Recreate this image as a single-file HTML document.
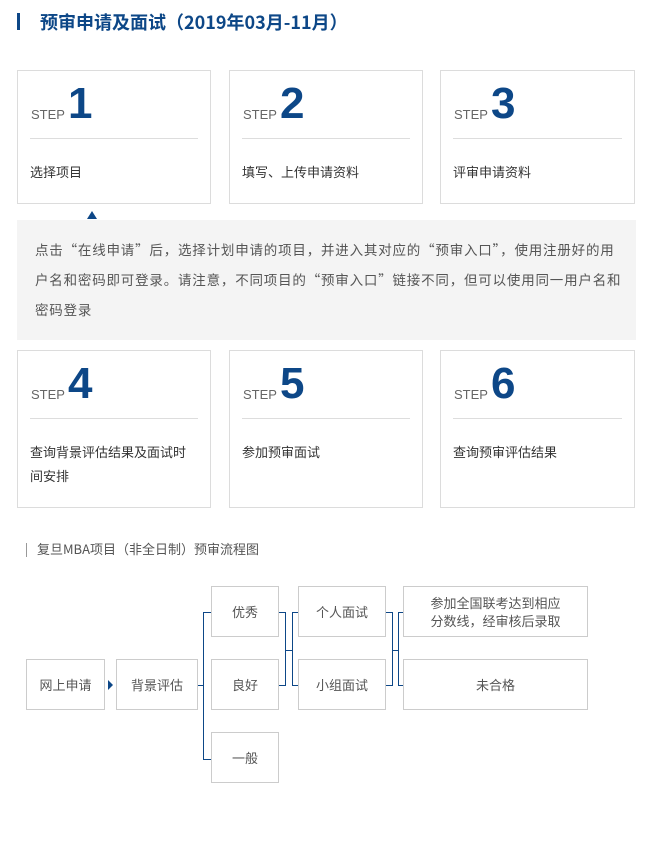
<!DOCTYPE html>
<html><head><meta charset="utf-8"><style>
*{margin:0;padding:0;box-sizing:border-box}
body{width:658px;height:850px;background:#fff;font-family:"Noto Sans CJK SC","Liberation Sans",sans-serif;position:relative;overflow:hidden;color:#555}
.a{position:absolute}
.title{left:40px;top:8px;font-size:18px;font-weight:bold;color:#0d4787;line-height:28px;white-space:nowrap}
.card{position:absolute;border:1px solid #dcdcdc;background:#fff}
.step{position:absolute;left:13px;top:36px;font-size:13px;color:#666;font-family:"Liberation Sans",sans-serif}
.num{position:absolute;left:50px;top:8px;font-size:44px;font-weight:bold;color:#0d4787;line-height:50px;font-family:"Liberation Sans",sans-serif}
.div{position:absolute;left:12px;right:12px;top:67px;border-top:1px solid #ddd}
.lab{position:absolute;left:12px;top:89px;font-size:13px;color:#333;line-height:24px;width:160px}
.gray{left:17px;top:220px;width:619px;height:120px;background:#f4f4f4;padding:14px 0 0 18px;font-size:13.5px;letter-spacing:0.8px;line-height:30px;color:#555;white-space:nowrap;overflow:hidden}
.box{position:absolute;border:1px solid #ccc;font-size:13px;color:#555;display:flex;align-items:center;justify-content:center;text-align:center;line-height:18px}
.ln{position:absolute;background:#0d4787}
</style></head><body>
<div class="a" style="left:17px;top:13px;width:3px;height:17px;background:#0d4787"></div>
<div class="a title">预审申请及面试（2019年03月-11月）</div>

<div class="card" style="left:17px;top:70px;width:194px;height:134px"><span class="step">STEP</span><span class="num">1</span><div class="div"></div><div class="lab">选择项目</div></div>
<div class="card" style="left:229px;top:70px;width:194px;height:134px"><span class="step">STEP</span><span class="num">2</span><div class="div"></div><div class="lab">填写、上传申请资料</div></div>
<div class="card" style="left:440px;top:70px;width:195px;height:134px"><span class="step">STEP</span><span class="num">3</span><div class="div"></div><div class="lab">评审申请资料</div></div>

<div class="a" style="left:87px;top:211px;width:0;height:0;border-left:5px solid transparent;border-right:5px solid transparent;border-bottom:8px solid #0d4787"></div>
<div class="a gray">点击“在线申请”后，选择计划申请的项目，并进入其对应的“预审入口”，使用注册好的用<br>户名和密码即可登录。请注意，不同项目的“预审入口”链接不同，但可以使用同一用户名和<br>密码登录</div>

<div class="card" style="left:17px;top:350px;width:194px;height:158px"><span class="step">STEP</span><span class="num">4</span><div class="div"></div><div class="lab">查询背景评估结果及面试时间安排</div></div>
<div class="card" style="left:229px;top:350px;width:194px;height:158px"><span class="step">STEP</span><span class="num">5</span><div class="div"></div><div class="lab">参加预审面试</div></div>
<div class="card" style="left:440px;top:350px;width:195px;height:158px"><span class="step">STEP</span><span class="num">6</span><div class="div"></div><div class="lab">查询预审评估结果</div></div>

<div class="a" style="left:26px;top:543px;width:1px;height:14px;background:#999"></div>
<div class="a" style="left:37px;top:540px;font-size:13px;color:#555;line-height:18px">复旦MBA项目（非全日制）预审流程图</div>

<div class="box" style="left:26px;top:659px;width:79px;height:51px">网上申请</div>
<div class="a" style="left:108px;top:680px;border-top:5px solid transparent;border-bottom:5px solid transparent;border-left:5px solid #0d4787"></div>
<div class="box" style="left:116px;top:659px;width:82px;height:51px">背景评估</div>
<div class="box" style="left:211px;top:586px;width:68px;height:51px">优秀</div>
<div class="box" style="left:211px;top:659px;width:68px;height:51px">良好</div>
<div class="box" style="left:211px;top:732px;width:68px;height:51px">一般</div>
<div class="box" style="left:298px;top:586px;width:88px;height:51px">个人面试</div>
<div class="box" style="left:298px;top:659px;width:88px;height:51px">小组面试</div>
<div class="box" style="left:403px;top:586px;width:185px;height:51px">参加全国联考达到相应<br>分数线，经审核后录取</div>
<div class="box" style="left:403px;top:659px;width:185px;height:51px">未合格</div>

<div class="ln" style="left:198px;top:685px;width:6px;height:1px"></div>
<div class="ln" style="left:203px;top:612px;width:1px;height:148px"></div>
<div class="ln" style="left:203px;top:612px;width:8px;height:1px"></div>
<div class="ln" style="left:203px;top:759px;width:8px;height:1px"></div>
<div class="ln" style="left:279px;top:612px;width:6px;height:1px"></div>
<div class="ln" style="left:279px;top:685px;width:6px;height:1px"></div>
<div class="ln" style="left:285px;top:612px;width:1px;height:74px"></div>
<div class="ln" style="left:285px;top:650px;width:7px;height:1px"></div>
<div class="ln" style="left:292px;top:612px;width:1px;height:74px"></div>
<div class="ln" style="left:292px;top:612px;width:6px;height:1px"></div>
<div class="ln" style="left:292px;top:685px;width:6px;height:1px"></div>
<div class="ln" style="left:386px;top:612px;width:6px;height:1px"></div>
<div class="ln" style="left:386px;top:685px;width:6px;height:1px"></div>
<div class="ln" style="left:392px;top:612px;width:1px;height:74px"></div>
<div class="ln" style="left:392px;top:650px;width:6px;height:1px"></div>
<div class="ln" style="left:398px;top:612px;width:1px;height:74px"></div>
<div class="ln" style="left:398px;top:612px;width:5px;height:1px"></div>
<div class="ln" style="left:398px;top:685px;width:5px;height:1px"></div>
</body></html>
